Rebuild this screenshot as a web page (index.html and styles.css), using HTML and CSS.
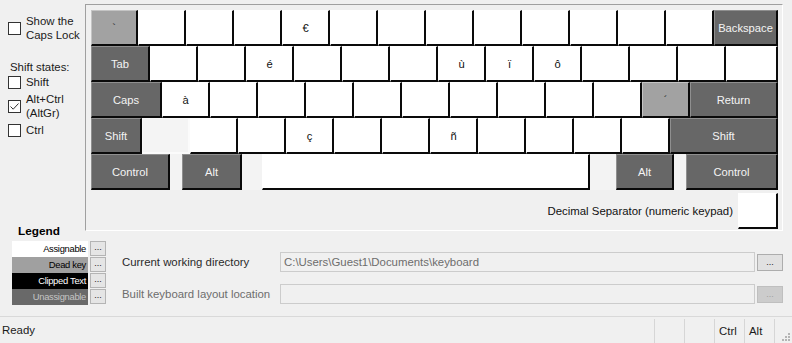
FILE: index.html
```html
<!DOCTYPE html>
<html>
<head>
<meta charset="utf-8">
<title>Keyboard layout</title>
<link rel="stylesheet" href="styles.css">
</head>
<body>
<div class="app">
  <div class="top">
    <div class="options">
      <div class="opt-group">
        <label class="check caps"><span class="box"></span><span class="lbl">Show the<br>Caps Lock</span></label>
        <div class="states-title">Shift states:</div>
        <label class="check shift"><span class="box"></span><span class="lbl">Shift</span></label>
        <label class="check altgr"><span class="box"><svg class="tick" viewBox="0 0 11 11" width="11" height="11"><path d="M1.5 5.5 L4.2 8.2 L9.5 2.5" fill="none" stroke="#333" stroke-width="1"/></svg></span><span class="lbl">Alt+Ctrl<br>(AltGr)</span></label>
        <label class="check ctrl"><span class="box"></span><span class="lbl">Ctrl</span></label>
      </div>
      <div class="legend-title">Legend</div>
    </div>
    <div class="panel">
      <div class="row">
        <div class="key dead k-grave">`</div>
        <div class="key"></div><div class="key"></div><div class="key"></div>
        <div class="key">€</div>
        <div class="key"></div><div class="key"></div><div class="key"></div><div class="key"></div>
        <div class="key"></div><div class="key"></div><div class="key"></div><div class="key"></div>
        <div class="key mod k-bksp">Backspace</div>
      </div>
      <div class="row">
        <div class="key mod k-tab">Tab</div>
        <div class="key"></div><div class="key"></div>
        <div class="key">é</div>
        <div class="key"></div><div class="key"></div><div class="key"></div>
        <div class="key">ù</div>
        <div class="key">ï</div>
        <div class="key">ô</div>
        <div class="key"></div><div class="key"></div><div class="key"></div>
        <div class="key k-bslash"></div>
      </div>
      <div class="row">
        <div class="key mod k-caps">Caps</div>
        <div class="key">à</div>
        <div class="key"></div><div class="key"></div><div class="key"></div><div class="key"></div><div class="key"></div>
        <div class="key"></div><div class="key"></div><div class="key"></div><div class="key"></div>
        <div class="key dead">´</div>
        <div class="key mod k-ret">Return</div>
      </div>
      <div class="row">
        <div class="key mod k-lshift">Shift</div>
        <div class="key blank"></div>
        <div class="key"></div><div class="key"></div>
        <div class="key">ç</div>
        <div class="key"></div><div class="key"></div>
        <div class="key">ñ</div>
        <div class="key"></div><div class="key"></div><div class="key"></div><div class="key"></div>
        <div class="key mod k-rshift">Shift</div>
      </div>
      <div class="row">
        <div class="key mod k-lctrl">Control</div>
        <div class="gap g12"></div>
        <div class="key mod k-lalt">Alt</div>
        <div class="gap g20"></div>
        <div class="key k-space"></div>
        <div class="gap g26"></div>
        <div class="key mod k-ralt">Alt</div>
        <div class="gap g12"></div>
        <div class="key mod k-rctrl">Control</div>
      </div>
      <div class="decimal">
        <span class="dec-label">Decimal Separator (numeric keypad)</span>
        <div class="key k-dec"></div>
      </div>
    </div>
  </div>
  <div class="bottom">
    <div class="legend">
      <div class="leg-row"><span class="sw sw-assign">Assignable</span><button class="dots">...</button></div>
      <div class="leg-row"><span class="sw sw-dead">Dead key</span><button class="dots">...</button></div>
      <div class="leg-row"><span class="sw sw-clip">Clipped Text</span><button class="dots">...</button></div>
      <div class="leg-row"><span class="sw sw-unas">Unassignable</span><button class="dots">...</button></div>
    </div>
    <div class="form">
      <div class="frow">
        <span class="flabel">Current working directory</span>
        <div class="tb">C:\Users\Guest1\Documents\keyboard</div>
        <button class="browse">...</button>
      </div>
      <div class="frow off">
        <span class="flabel">Built keyboard layout location</span>
        <div class="tb"></div>
        <button class="browse" disabled>...</button>
      </div>
    </div>
  </div>
  <div class="status">
    <div class="ready">Ready</div>
    <div class="sp"></div>
    <div class="sp"></div>
    <div class="sp">Ctrl</div>
    <div class="sp">Alt</div>
    <div class="grip"><svg viewBox="0 0 8 8" width="8" height="8"><g fill="#b4b4b4"><rect x="6" y="0" width="2" height="2"/><rect x="3" y="3" width="2" height="2"/><rect x="6" y="3" width="2" height="2"/><rect x="0" y="6" width="2" height="2"/><rect x="3" y="6" width="2" height="2"/><rect x="6" y="6" width="2" height="2"/></g></svg></div>
  </div>
</div>
</body>
</html>
```
FILE: styles.css
```css
* { box-sizing: border-box; }
html, body { margin: 0; padding: 0; }
body {
  width: 792px;
  height: 343px;
  overflow: hidden;
  background: #f0f0f0;
  font-family: "Liberation Sans", Arial, sans-serif;
  font-size: 11.4px;
  color: #000;
}
.app { display: flex; flex-direction: column; height: 343px; }

/* top area */
.top { display: flex; height: 238px; }
.options {
  width: 85px;
  flex: none;
  display: flex;
  flex-direction: column;
  justify-content: space-between;
}
.opt-group { display: flex; flex-direction: column; padding-top: 14px; }
.check {
  display: flex;
  align-items: center;
  gap: 5px;
  padding-left: 8px;
  line-height: 14px;
  color: #1a1a1a;
}
.box {
  width: 13px;
  height: 13px;
  flex: none;
  border: 1px solid #333;
  background: #fff;
  display: flex;
  align-items: center;
  justify-content: center;
}
.tick { display: block; }
.states-title { margin-top: 18px; padding-left: 10px; line-height: 14px; color: #1a1a1a; }
.check.shift { margin-top: 1px; }
.check.altgr { margin-top: 3px; }
.check.ctrl { margin-top: 3px; }
.legend-title {
  font-weight: bold;
  font-size: 11.8px;
  line-height: 14px;
  padding-left: 18px;
}

/* keyboard panel */
.panel {
  flex: 1;
  margin: 4px 9px 7px 0;
  border: 1px solid;
  border-color: #a0a0a0 #ffffff #ffffff #a0a0a0;
  padding: 5px 4px 1px 5px;
  display: flex;
  flex-direction: column;
}
.row { display: flex; height: 36px; }
.key {
  width: 48px;
  height: 36px;
  flex: none;
  border-style: solid;
  border-width: 1px 2px 2px 1px;
  border-color: #ffffff #0a0a0a #0a0a0a #ffffff;
  background: #ffffff;
  display: flex;
  align-items: center;
  justify-content: center;
  font-size: 11.2px;
  color: #111;
}
.key.mod {
  background: #676767;
  border-color: #8f8f8f #0a0a0a #0a0a0a #8f8f8f;
  color: #f4f4f4;
}
.key.dead {
  background: #a2a2a2;
  border-color: #c4c4c4 #0a0a0a #0a0a0a #c4c4c4;
  color: #222;
}
.key.blank {
  background: #f4f4f4;
  border-color: #f8f8f8 #fbfbfb #fbfbfb #f8f8f8;
}
.gap { height: 36px; flex: none; background: #f3f3f3; }
.g12 { width: 12px; }
.g20 { width: 20px; }
.g26 { width: 26px; }
.k-grave { width: 47px; }
.k-bksp { width: 64px; }
.k-tab { width: 59px; }
.k-bslash { width: 52px; }
.k-caps { width: 71px; }
.k-ret { width: 88px; }
.k-lshift { width: 51px; }
.k-rshift { width: 108px; }
.k-lctrl { width: 79px; }
.k-lalt { width: 60px; }
.k-space { width: 328px; }
.k-ralt { width: 58px; }
.k-rctrl { width: 92px; }
.decimal {
  margin-top: 3px;
  display: flex;
  justify-content: flex-end;
  align-items: center;
  gap: 5px;
}
.dec-label { color: #111; }
.k-dec { width: 40px; }

/* bottom area */
.bottom { display: flex; height: 78px; }
.legend {
  margin: 3px 0 0 12px;
  width: 94px;
  flex: none;
  display: flex;
  flex-direction: column;
}
.leg-row { display: flex; height: 16px; align-items: flex-start; }
.sw {
  width: 76px;
  height: 16px;
  font-size: 9.4px;
  letter-spacing: -0.3px;
  line-height: 16px;
  text-align: right;
  padding-right: 2px;
  white-space: nowrap;
}
.sw-assign { background: #ffffff; color: #000; }
.sw-dead { background: #a0a0a0; color: #000; }
.sw-clip { background: #000000; color: #fff; }
.sw-unas { background: #696969; color: #c4c4c4; }
.dots {
  margin: 0 0 0 2px;
  width: 16px;
  height: 15px;
  padding: 0 0 3px 0;
  border: 1px solid #b4b4b4;
  background: #e5e5e5;
  font-family: "Liberation Sans", Arial, sans-serif;
  font-size: 9px;
  line-height: 9px;
  color: #222;
  display: flex;
  align-items: flex-end;
  justify-content: center;
}
.form {
  flex: 1;
  margin: 0 9px 0 16px;
  padding-top: 14px;
  display: flex;
  flex-direction: column;
  gap: 12px;
}
.frow { display: flex; align-items: center; height: 20px; }
.flabel { width: 158px; flex: none; color: #2a2a2a; }
.frow.off .flabel { color: #6d6d6d; }
.tb {
  flex: 1;
  height: 20px;
  border: 1px solid #cccccc;
  background: #f0f0f0;
  color: #6d6d6d;
  padding-left: 3px;
  line-height: 18px;
  white-space: nowrap;
}
.browse {
  margin: 0 0 0 2px;
  width: 26px;
  height: 17px;
  padding: 0 0 3px 0;
  border: 1px solid #adadad;
  background: #e1e1e1;
  font-family: "Liberation Sans", Arial, sans-serif;
  font-size: 9px;
  line-height: 9px;
  color: #222;
  display: flex;
  align-items: flex-end;
  justify-content: center;
}
.browse:disabled {
  border-color: #bfbfbf;
  background: #cccccc;
  color: #a0a0a0;
}

/* status bar */
.status {
  height: 27px;
  border-top: 1px solid #d9d9d9;
  display: flex;
}
.ready { flex: 1; padding-left: 2px; display: flex; align-items: center; color: #1a1a1a; }
.sp {
  width: 30px;
  flex: none;
  margin-top: 2px;
  border-left: 1px solid #d6d6d6;
  padding-left: 4px;
  display: flex;
  align-items: center;
  color: #1a1a1a;
}
.grip {
  width: 18px;
  flex: none;
  margin-top: 2px;
  border-left: 1px solid #d6d6d6;
  display: flex;
  align-items: flex-end;
  justify-content: flex-end;
  padding: 0 2px 2px 0;
}
.grip svg { display: block; }
```
